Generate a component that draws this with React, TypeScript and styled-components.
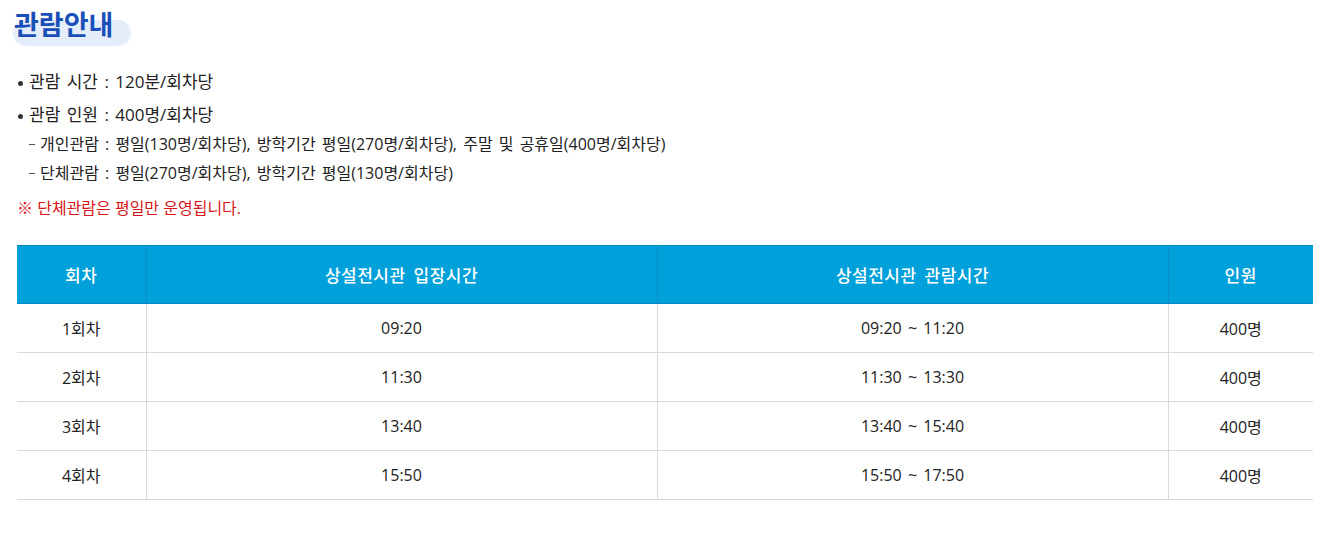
import styled, { createGlobalStyle } from "styled-components"

const GlobalStyle = createGlobalStyle`
  body {
    margin: 0;
    background: #fff;
    font-family: "Open Sans", "Noto Sans CJK KR", sans-serif;
    color: #222;
  }
`

type Row = { round: string; enter: string; range: string; people: string }

const rows: Row[] = [
  { round: "1회차", enter: "09:20", range: "09:20 ~ 11:20", people: "400명" },
  { round: "2회차", enter: "11:30", range: "11:30 ~ 13:30", people: "400명" },
  { round: "3회차", enter: "13:40", range: "13:40 ~ 15:40", people: "400명" },
  { round: "4회차", enter: "15:50", range: "15:50 ~ 17:50", people: "400명" },
]

export default function App() {
  return (
    <>
      <GlobalStyle />
      <Page>
        <Title>관람안내</Title>
        <InfoList>
          <Bullet>관람 시간 : 120분/회차당</Bullet>
          <Bullet $gap={11}>관람 인원 : 400명/회차당</Bullet>
          <SubItem>개인관람 : 평일(130명/회차당), 방학기간 평일(270명/회차당), 주말 및 공휴일(400명/회차당)</SubItem>
          <SubItem>단체관람 : 평일(270명/회차당), 방학기간 평일(130명/회차당)</SubItem>
        </InfoList>
        <Notice>※ 단체관람은 평일만 운영됩니다.</Notice>
        <Table>
          <colgroup>
            <col style={{ width: 129 }} />
            <col style={{ width: 511 }} />
            <col style={{ width: 511 }} />
            <col />
          </colgroup>
          <thead>
            <tr>
              <Th>회차</Th>
              <Th>상설전시관 입장시간</Th>
              <Th>상설전시관 관람시간</Th>
              <Th>인원</Th>
            </tr>
          </thead>
          <tbody>
            {rows.map(r => (
              <tr key={r.round}>
                <Td>{r.round}</Td>
                <Td>{r.enter}</Td>
                <Td>{r.range}</Td>
                <Td>{r.people}</Td>
              </tr>
            ))}
          </tbody>
        </Table>
      </Page>
    </>
  )
}

const Page = styled.div`
  padding: 6px 18px 0 17px;
`

const Title = styled.h2`
  position: relative;
  display: inline-block;
  margin: 0 0 0 -4px;
  padding: 0 1px;
  font-family: "Noto Sans CJK KR", sans-serif;
  font-size: 27px;
  line-height: 36px;
  font-weight: 700;
  color: #1b4fb8;
  letter-spacing: 0;
  z-index: 0;
  &::after {
    content: "";
    position: absolute;
    left: 0;
    right: -17px;
    top: 14px;
    height: 26px;
    border-radius: 13px;
    background: #e4edf9;
    z-index: -1;
  }
`

const InfoList = styled.ul`
  list-style: none;
  margin: 29px 0 0;
  padding: 0;
  font-size: 16px;
  line-height: 22px;
  word-spacing: 2px;
  color: #222;
`

const Bullet = styled.li<{ $gap?: number }>`
  position: relative;
  margin-top: ${p => p.$gap ?? 0}px;
  padding-left: 12px;
  font-size: 17px;
  &::before {
    content: "";
    position: absolute;
    left: 1px;
    top: 10px;
    width: 5px;
    height: 5px;
    border-radius: 50%;
    background: #333;
  }
`

const SubItem = styled.li`
  position: relative;
  margin-top: 7px;
  padding-left: 23px;
  &::before {
    content: "";
    position: absolute;
    left: 12px;
    top: 11px;
    width: 6px;
    height: 1px;
    background: #555;
  }
`

const Notice = styled.p`
  margin: 13px 0 0;
  font-size: 16px;
  line-height: 22px;
  color: #d7141a;
`

const Table = styled.table`
  width: 1296px;
  margin-top: 26px;
  border-collapse: collapse;
  table-layout: fixed;
`

const Th = styled.th`
  height: 57px;
  padding: 0;
  background: #00a0da;
  border-top: 1px solid #0088c0;
  border-bottom: 1px solid #0088c0;
  border-left: 1px solid #0a8cc4;
  color: #fff;
  font-size: 17px;
  font-weight: 500;
  letter-spacing: 0.5px;
  word-spacing: 3px;
  text-align: center;
  &:first-child {
    border-left: none;
  }
`

const Td = styled.td`
  height: 48px;
  padding: 0;
  border-bottom: 1px solid #dadada;
  border-left: 1px solid #dadada;
  font-size: 16px;
  word-spacing: 2px;
  text-align: center;
  color: #222;
  &:first-child {
    border-left: none;
  }
`
